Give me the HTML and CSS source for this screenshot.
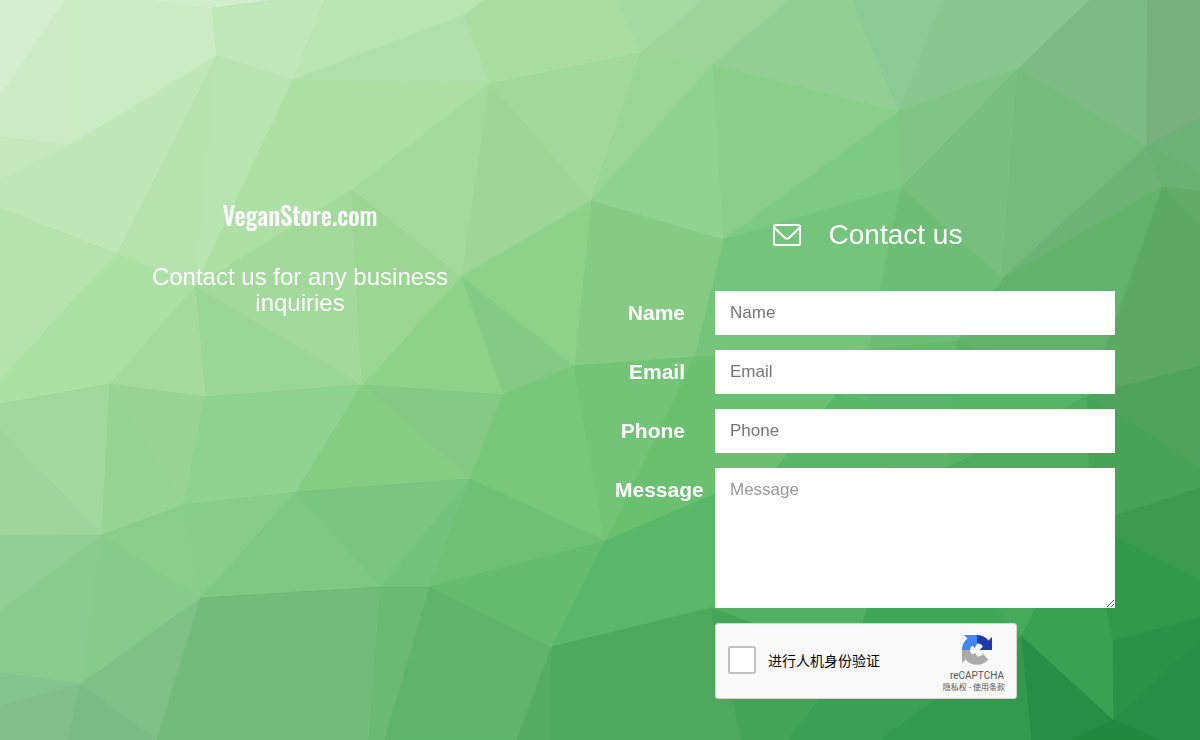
FILE: index.html
```html
<!DOCTYPE html>
<html lang="en">
<head>
    <meta charset="UTF-8">
    <meta name="viewport" content="width=device-width, initial-scale=1.0">
    <title>VeganStore.com</title>
    <link rel="stylesheet" href="styles.css">
</head>
<body>
    <!-- Low poly background -->
    <svg class="background" viewBox="0 0 1200 740" preserveAspectRatio="xMidYMid slice" aria-hidden="true">
        <polygon color="#d6eed0" points="0,0 65,0 0,97"/>
        <polygon color="#cdeac6" points="65,0 71,0 71,145 0,137 0,97"/>
        <polygon color="#cbebc5" points="71,0 155,0 212,8 217,56 71,145"/>
        <polygon color="#d2edcb" points="155,0 275,0 212,8"/>
        <polygon color="#c1e8b8" points="212,8 275,0 325,0 293,80 217,56"/>
        <polygon color="#c6e8bf" points="0,137 71,145 0,180"/>
        <polygon color="#bfe7b8" points="71,145 217,56 117,254 0,208 0,180"/>
        <polygon color="#b6e2ae" points="217,56 195,287 117,254"/>
        <polygon color="#b8e4b2" points="217,56 293,80 195,287"/>
        <polygon color="#b9e5b2" points="325,0 484,0 465,15 293,80"/>
        <polygon color="#b0dfac" points="293,80 465,15 489,84"/>
        <polygon color="#aee0a6" points="293,80 489,84 352,190 195,287"/>
        <polygon color="#abdda3" points="484,0 617,0 641,53 489,84 465,15"/>
        <polygon color="#a7daa2" points="617,0 703,0 641,53"/>
        <polygon color="#9cd49a" points="703,0 790,0 712,65 641,53"/>
        <polygon color="#a1d89c" points="489,84 641,53 591,201"/>
        <polygon color="#9ad596" points="641,53 712,65 591,201"/>
        <polygon color="#9dd697" points="489,84 591,201 461,277"/>
        <polygon color="#a4da9c" points="489,84 461,277 352,190"/>
        <polygon color="#93cf95" points="790,0 852,0 899,112 712,65"/>
        <polygon color="#8dc994" points="852,0 943,0 899,112"/>
        <polygon color="#8ac690" points="943,0 1090,0 1018,69 899,112"/>
        <polygon color="#7eba84" points="1090,0 1148,0 1147,146 1018,69"/>
        <polygon color="#78b17e" points="1148,0 1200,0 1200,118 1147,146"/>
        <polygon color="#8bce8c" points="712,65 899,112 723,240"/>
        <polygon color="#90d28f" points="712,65 723,240 591,201"/>
        <polygon color="#7ec983" points="899,112 901,188 723,240"/>
        <polygon color="#80c486" points="899,112 1018,69 901,188"/>
        <polygon color="#78bf7f" points="901,188 1018,69 1002,279"/>
        <polygon color="#75bb7c" points="1018,69 1147,146 1002,279"/>
        <polygon color="#6db376" points="1147,146 1162,187 1002,279"/>
        <polygon color="#6cb277" points="1147,146 1200,118 1200,172"/>
        <polygon color="#69b172" points="1147,146 1200,172 1200,191 1162,187"/>
        <polygon color="#64ab6a" points="1162,187 1200,191 1200,224"/>
        <polygon color="#5ea866" points="1162,187 1200,224 1200,366 1088,396"/>
        <polygon color="#63b26c" points="1162,187 1088,396 957,341 1002,279"/>
        <polygon color="#6dbd76" points="901,188 1002,279 957,341 864,375"/>
        <polygon color="#75c47b" points="723,240 901,188 864,350 694,357"/>
        <polygon color="#6bc06f" points="694,357 864,350 837,394 776,468 605,541"/>
        <polygon color="#85cb83" points="591,201 723,240 694,357 574,366"/>
        <polygon color="#8ed28a" points="591,201 574,366 461,277"/>
        <polygon color="#84ca84" points="461,277 574,366 503,395"/>
        <polygon color="#8ed189" points="461,277 503,395 362,385"/>
        <polygon color="#a3d99b" points="195,287 352,190 362,385"/>
        <polygon color="#9bd693" points="352,190 461,277 362,385"/>
        <polygon color="#9bd794" points="195,287 362,385 205,397"/>
        <polygon color="#b6e2ad" points="0,208 117,254 0,380"/>
        <polygon color="#ade0a5" points="117,254 195,287 110,384 0,404 0,380"/>
        <polygon color="#a5da9d" points="195,287 205,397 110,384"/>
        <polygon color="#a1d89e" points="0,404 110,384 102,535 0,430"/>
        <polygon color="#9ed59c" points="0,430 102,535 0,536"/>
        <polygon color="#99d495" points="110,384 205,397 184,505"/>
        <polygon color="#97d394" points="110,384 184,505 102,535"/>
        <polygon color="#90d28f" points="205,397 362,385 296,492 184,505"/>
        <polygon color="#84ca84" points="362,385 503,395 470,479"/>
        <polygon color="#86cd84" points="362,385 470,479 296,492"/>
        <polygon color="#78c77b" points="503,395 574,366 605,541 470,479"/>
        <polygon color="#73c477" points="574,366 694,357 605,541"/>
        <polygon color="#92cf97" points="0,536 102,535 0,611"/>
        <polygon color="#8bca8e" points="0,611 102,535 81,684 0,673"/>
        <polygon color="#86ca8c" points="102,535 201,598 81,684"/>
        <polygon color="#8acc8a" points="102,535 184,505 201,598"/>
        <polygon color="#87cd88" points="184,505 296,492 201,598"/>
        <polygon color="#7ec883" points="296,492 201,598 381,587"/>
        <polygon color="#7ac57f" points="296,492 470,479 381,587"/>
        <polygon color="#74c27b" points="470,479 430,587 381,587"/>
        <polygon color="#6ec174" points="470,479 605,541 430,587"/>
        <polygon color="#86c48f" points="0,673 81,684 0,706"/>
        <polygon color="#83bd8a" points="0,706 81,684 68,740 0,740"/>
        <polygon color="#7bb985" points="81,684 157,740 68,740"/>
        <polygon color="#7ec086" points="81,684 201,598 157,740"/>
        <polygon color="#72bb7a" points="201,598 381,587 369,740 157,740"/>
        <polygon color="#6bb974" points="381,587 430,587 385,740 369,740"/>
        <polygon color="#5fb36a" points="430,587 552,647 517,740 385,740"/>
        <polygon color="#55ac62" points="552,647 552,740 517,740"/>
        <polygon color="#65bc6f" points="430,587 605,541 552,647"/>
        <polygon color="#5ab76a" points="605,541 776,468 711,608 552,647"/>
        <polygon color="#4ea95f" points="552,647 711,608 742,740 552,740"/>
        <polygon color="#58b767" points="837,394 868,394 882,453 882,608 711,608 776,468"/>
        <polygon color="#62bb6d" points="864,350 957,341 954,409 868,400 837,394"/>
        <polygon color="#5bb468" points="868,394 954,394 948,468 882,468"/>
        <polygon color="#58b465" points="957,341 1088,396 948,468 954,394"/>
        <polygon color="#4fab5d" points="948,468 1088,396 1090,524 1036,608 868,608"/>
        <polygon color="#4eb262" points="711,608 882,600 868,608 850,660"/>
        <polygon color="#44a55a" points="711,608 850,660 788,740 742,740"/>
        <polygon color="#3fa858" points="868,608 995,608 1022,636 850,660"/>
        <polygon color="#3b9f55" points="850,660 1022,636 880,740 788,740"/>
        <polygon color="#32994e" points="1022,636 1032,740 880,740"/>
        <polygon color="#268e47" points="1022,636 1114,720 1070,740 1032,740"/>
        <polygon color="#39a054" points="1022,636 1113,640 1114,720"/>
        <polygon color="#45aa5b" points="995,608 1036,608 1022,636"/>
        <polygon color="#39a054" points="1036,608 1090,524 1108,608 1113,640 1022,636"/>
        <polygon color="#2a9248" points="1113,640 1200,617 1200,640 1114,720"/>
        <polygon color="#268e46" points="1200,640 1200,740 1160,740 1114,720"/>
        <polygon color="#208941" points="1114,720 1160,740 1070,740"/>
        <polygon color="#4fa25b" points="1088,396 1200,366 1200,468"/>
        <polygon color="#48a357" points="1088,396 1200,468 1200,488 1090,524"/>
        <polygon color="#3c9b51" points="1090,524 1200,488 1200,580"/>
        <polygon color="#32994c" points="1090,524 1200,580 1200,617 1113,640"/>
    </svg>

    <main class="container">
        <section class="intro">
            <h1 class="brand">VeganStore.com</h1>
            <p class="tagline">Contact us for any business inquiries</p>
        </section>

        <section class="contact">
            <h2 class="contact-title">
                <svg class="envelope" viewBox="0 0 28 22" aria-hidden="true">
                    <rect x="1" y="1" width="26" height="20" rx="1.5"/>
                    <path d="M1.5 3.5Q5 7.5 11 13Q14 16.500 17 13Q23 7.500 26.500 3.500"/>
                </svg>
                Contact us
            </h2>

            <form class="contact-form">
                <div class="form-group">
                    <label for="name">Name</label>
                    <input type="text" id="name" placeholder="Name">
                </div>
                <div class="form-group">
                    <label for="email">Email</label>
                    <input type="email" id="email" placeholder="Email">
                </div>
                <div class="form-group">
                    <label for="phone">Phone</label>
                    <input type="tel" id="phone" placeholder="Phone">
                </div>
                <div class="form-group">
                    <label for="message">Message</label>
                    <textarea id="message" placeholder="Message"></textarea>
                </div>

                <div class="captcha" lang="zh-CN">
                    <input type="checkbox" id="captcha-check">
                    <label for="captcha-check">进行人机身份验证</label>
                    <div class="captcha-info">
                        <svg class="captcha-logo" viewBox="0 0 30 30" aria-hidden="true">
                            <path fill="#1c3aa9" d="M15 0A15 15 0 0 1 26.500 5.500L30 2V15H17.500L21 11.500Q19 8 15 8.500Z"/>
                            <path fill="#4285f4" d="M15 0H2L5.500 3.500A15 15 0 0 0 0 15H8Q8 12 10.500 10.500L12.500 13L15 9.500Z"/>
                            <path fill="#ababab" d="M0 15V28L3.500 24.500A15 15 0 0 0 26.500 24.500L21 19Q18.500 22 15 21.500L13.500 18L10 19.500Q8 17.500 8 15Z"/>
                        </svg>
                        <span class="captcha-name">reCAPTCHA</span>
                        <span class="captcha-links"><a href="#">隐私权</a> - <a href="#">使用条款</a></span>
                    </div>
                </div>
            </form>
        </section>
    </main>
</body>
</html>
```
FILE: styles.css
```css
* {
    box-sizing: border-box;
}

body {
    margin: 0;
    min-height: 100vh;
    font-family: "Liberation Sans", Arial, sans-serif;
    color: #fff;
    background-color: #74c27b;
}

.background {
    position: fixed;
    top: 0;
    left: 0;
    z-index: -1;
    width: 100%;
    height: 100%;
}

/* the stroke closes the hairlines between neighbours */
.background polygon {
    fill: currentColor;
    stroke: currentColor;
    stroke-width: 1px;
    stroke-linejoin: round;
}

.container {
    display: grid;
    grid-template-columns: 1fr 1fr;
    padding-top: 200px;
}

.intro {
    text-align: center;
}

.brand {
    margin: 0 0 34px;
    font-family: Oswald, "Liberation Sans Narrow", Roboto, sans-serif;
    font-size: 25px;
    font-weight: 500;
    line-height: 30px;
}

.tagline {
    max-width: 340px;
    margin: 0 auto;
    font-size: 24px;
    line-height: 26px;
}

.contact {
    padding: 19px 85px 40px 15px;
}

.contact-title {
    display: flex;
    justify-content: center;
    align-items: center;
    gap: 28px;
    margin: 0 0 40px;
    padding-left: 5px;
    font-size: 28px;
    font-weight: normal;
    line-height: 32px;
}

.envelope {
    width: 28px;
    height: 22px;
    fill: none;
    stroke: #fff;
    stroke-width: 2px;
}

.contact-form {
    display: flex;
    flex-direction: column;
    gap: 15px;
}

.form-group {
    display: grid;
    grid-template-columns: 70px 1fr;
    column-gap: 30px;
}

.form-group label {
    font-size: 21px;
    font-weight: bold;
    line-height: 44px;
    text-align: right;
}

.form-group input,
.form-group textarea {
    display: block;
    width: 100%;
    height: 44px;
    margin: 0;
    padding: 10px 15px;
    border: none;
    border-radius: 0;
    background-color: #fff;
    color: #555;
    font-family: inherit;
    font-size: 17px;
    line-height: 24px;
}

.form-group textarea {
    height: 140px;
    resize: vertical;
}

.form-group input::placeholder {
    color: #757575;
}

.form-group textarea::placeholder {
    color: #999;
}

/* captcha box */
.captcha {
    display: flex;
    align-items: center;
    width: 302px;
    height: 76px;
    margin-left: 100px;
    padding: 0 11px 2px 12px;
    border: 1px solid #d3d3d3;
    border-radius: 3px;
    background-color: #f9f9f9;
    color: #000;
    font-family: Roboto, "Noto Sans CJK SC", sans-serif;
}

.captcha input {
    appearance: none;
    width: 28px;
    height: 28px;
    margin: 0 12px 0 0;
    border: 2px solid #c1c1c1;
    border-radius: 2px;
    background-color: #fff;
}

.captcha label {
    font-size: 14px;
}

.captcha-info {
    display: flex;
    flex-direction: column;
    align-items: center;
    margin-left: auto;
    padding-top: 8px;
    color: #555;
}

.captcha-logo {
    width: 30px;
    height: 30px;
    margin-left: 6px;
}

.captcha-name {
    margin: 5px 0 0 6px;
    font-size: 10px;
    line-height: 12px;
}

.captcha-links {
    font-size: 8px;
    line-height: 12px;
}

.captcha-links a {
    color: #555;
    text-decoration: none;
}
```
